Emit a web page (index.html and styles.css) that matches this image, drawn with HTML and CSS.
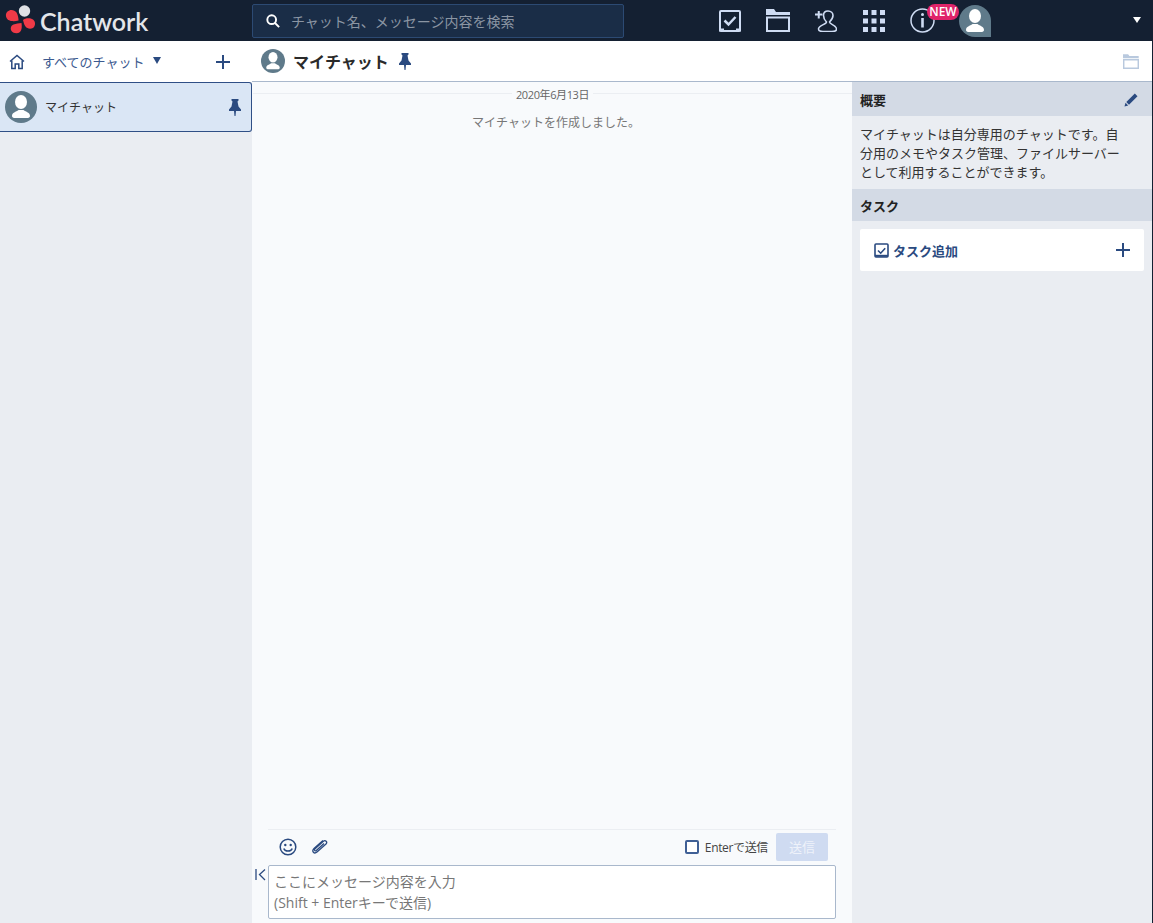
FILE: index.html
```html
<!DOCTYPE html>
<html lang="ja">
  <head>
    <meta charset="utf-8">
    <title>Chatwork</title>
    <link rel="stylesheet" href="styles.css">
  </head>
  <body>
    <div class="Header">
      <div class="Logo">
        <svg class="LogoMark" width="31" height="31" viewBox="5 5 31 31">
          <circle cx="24.5" cy="11" r="5.7" fill="#dfe1e5"/>
          <path d="M18.5 20.5C15 21.5 11 21.5 8.5 20 5.5 18 5 14 7.5 11.5 10 9 14.500 9.500 16.500 12.500 18 15 18.500 18 18.500 20.500z" fill="#f03a47"/>
          <path d="M23 20C25 18 30 17.500 33 19.500 36 22 35.500 26 33 28 30 29.500 27 28.500 25.500 26.500 24 24.500 23.500 22 23 20z" fill="#f03a47"/>
          <path d="M21.500 23C22 26 22 30 20 32 17.500 34 13.500 33.500 11.500 31 10 28.500 11 25.500 13.500 24.500 16 23.500 19 23.500 21.500 23z" fill="#f03a47"/>
        </svg>
        <span class="LogoText">Chatwork</span>
      </div>
      <div class="Search">
        <svg width="14" height="14" viewBox="0 0 16 16" fill="none" stroke="#fff" stroke-width="2.2"><circle cx="6.5" cy="6.500" r="5"/><path d="M10 10l5 5"/></svg>
        <span class="SearchText">チャット名、メッセージ内容を検索</span>
      </div>
      <div class="HeaderIcons">
        <svg class="TopIcon" width="22" height="22" viewBox="0 0 22 22" fill="none" stroke="#cfdcf3" stroke-width="2"><rect x="1" y="1" width="20" height="20" rx="1"/><path d="M5.500 10.500l4 4 7-7.500" stroke-width="2.500"/><path d="M0 20h5M17 20h5" stroke-width="3"/></svg>
        <svg class="TopIcon" width="24" height="23" viewBox="0 0 24 23" fill="none"><path d="M0 0h8l2 3h14v3H0z" fill="#cfdcf3"/><path d="M1 8.500h22V22H1z" stroke="#cfdcf3" stroke-width="2"/></svg>
        <svg class="TopIcon" width="22" height="22" viewBox="0 0 22 22" fill="none" stroke="#cfdcf3" stroke-width="1.600"><path d="M0 4.500h7.500M3.750 1v7.500" stroke-width="2"/><path d="M13 1C10 1 8.500 3 8.500 5.500 8.500 8.500 10 10.500 11.500 12 11.500 14.500 3.500 15 3.500 19 3.500 21 6 21.500 8 21.500H17C19 21.500 21.500 21 21.500 19 21.500 15 14.500 14.500 14.500 12 16 10.500 18 8.500 18 5.500 18 3 16 1 13 1z"/></svg>
        <svg class="TopIcon" width="22" height="22" viewBox="0 0 22 22" fill="#cfdcf3"><rect width="5" height="5"/><rect x="8.500" width="5" height="5"/><rect x="17" width="5" height="5"/><rect y="8.500" width="5" height="5"/><rect x="8.500" y="8.500" width="5" height="5"/><rect x="17" y="8.500" width="5" height="5"/><rect y="17" width="5" height="5"/><rect x="8.500" y="17" width="5" height="5"/><rect x="17" y="17" width="5" height="5"/></svg>
        <div class="InfoIcon">
          <svg width="25" height="25" viewBox="0 0 25 25" fill="none" stroke="#cfdcf3"><circle cx="12.5" cy="12.5" r="11.500" stroke-width="1.500"/><path d="M12.500 10v9.500" stroke-width="2.600"/><circle cx="12.500" cy="6.500" r="1.500" fill="#cfdcf3" stroke="none"/></svg>
          <span class="NewBadge">NEW</span>
        </div>
        <div class="UserTab">
          <svg width="32" height="32" viewBox="0 0 32 32" fill="#fff"><ellipse cx="16" cy="11" rx="6" ry="7"/><path d="M7 25c0-3.500 4-4 6.500-6h5c2.500 2 6.500 2.500 6.500 6 0 1.500-1.500 2-3 2H10c-1.500 0-3-.5-3-2z"/></svg>
        </div>
      </div>
      <span class="HeaderCaret"></span>
    </div>

    <div class="Main">
      <div class="Left">
        <div class="LeftTop">
          <svg class="HomeIcon" width="16" height="16" viewBox="0 0 16 16" fill="none" stroke="#2a4a80" stroke-width="1.500"><path d="M1 7.500L8 1.500l7 6"/><path d="M2.800 6.500v8h3.400V10h3.600v4.500h3.400v-8"/></svg>
          <span class="AllChats">すべてのチャット</span>
          <span class="BlueCaret"></span>
          <svg class="PlusIcon" width="14" height="14" viewBox="0 0 14 14" stroke="#2a4a80" stroke-width="2"><path d="M7 0v14M0 7h14"/></svg>
        </div>
        <div class="Room">
          <div class="Avatar Big">
            <svg width="32" height="32" viewBox="0 0 32 32" fill="#fff"><ellipse cx="16" cy="11" rx="6" ry="7"/><path d="M7 25c0-3.500 4-4 6.500-6h5c2.500 2 6.500 2.500 6.500 6 0 1.500-1.500 2-3 2H10c-1.500 0-3-.5-3-2z"/></svg>
          </div>
          <span class="RoomName">マイチャット</span>
          <svg class="Pin" width="12" height="17" viewBox="0 0 12 17" fill="#2a4a80"><path d="M2.500 0h7v1.500L8.500 2.500l1 5L12 10.500V12H7l-.5 5h-1L5 12H0v-1.500l2.500-3 1-5-1-1z"/></svg>
        </div>
      </div>

      <div class="Body">
        <div class="TitleBar">
          <div class="Avatar Small">
            <svg width="24" height="24" viewBox="0 0 32 32" fill="#fff"><ellipse cx="16" cy="11" rx="6" ry="7"/><path d="M7 25c0-3.500 4-4 6.500-6h5c2.500 2 6.500 2.500 6.500 6 0 1.500-1.500 2-3 2H10c-1.500 0-3-.5-3-2z"/></svg>
          </div>
          <span class="RoomTitle">マイチャット</span>
          <svg class="Pin TitlePin" width="12" height="17" viewBox="0 0 12 17" fill="#2a4a80"><path d="M2.500 0h7v1.500L8.500 2.500l1 5L12 10.500V12H7l-.5 5h-1L5 12H0v-1.500l2.500-3 1-5-1-1z"/></svg>
          <svg class="TitleFolder" width="16" height="15" viewBox="0 0 25 23" fill="none"><path d="M0 0h8l2 3h14.500v3H0z" fill="#b9c9de"/><path d="M1 8.500h23V22H1z" stroke="#b9c9de" stroke-width="2.500"/></svg>
        </div>
        <div class="Columns">
          <div class="Center">
            <div class="Messages">
              <div class="DateLine"><span>2020年6月13日</span></div>
              <p class="Notice">マイチャットを作成しました。</p>
            </div>
            <div class="Composer">
              <div class="Tools">
                <svg class="Smile" width="18" height="18" viewBox="0 0 18 18" fill="none" stroke="#2a4a80" stroke-width="1.500"><circle cx="9" cy="9" r="7.800"/><circle cx="6.300" cy="7" r="1.200" fill="#2a4a80" stroke="none"/><circle cx="11.700" cy="7" r="1.200" fill="#2a4a80" stroke="none"/><path d="M4.800 10.500c1 3.400 7.400 3.400 8.400 0"/></svg>
                <svg class="Clip" width="17" height="16" viewBox="0 0 17 16" fill="none" stroke="#2a4a80" stroke-width="1.300"><path d="M12 1.500L3 9.500c-2.800 2.800.2 6 3 3.600l9-8c1.800-2-.6-4.500-2.600-2.800L3.800 10c-1 1.200.4 2.400 1.500 1.500L13 4.500"/></svg>
                <span class="CheckBox"></span>
                <span class="EnterLabel">Enterで送信</span>
                <span class="SendBtn">送信</span>
              </div>
              <div class="InputRow">
                <svg class="Collapse" width="11" height="12" viewBox="0 0 11 12" fill="none" stroke="#2a4a80" stroke-width="1.300"><path d="M1 0v11"/><path d="M10 .5L4.500 5.500l5.500 5.500"/></svg>
                <div class="InputBox">
                  <span class="Hint">ここにメッセージ内容を入力</span>
                  <span class="Hint">(Shift + Enterキーで送信)</span>
                </div>
              </div>
            </div>
          </div>

          <div class="Right">
            <div class="PanelHead First">
              <span>概要</span>
              <svg width="14" height="14" viewBox="0 0 14 14" fill="#2a4a80"><path d="M10.800.5l2.700 2.700-8.500 8.500-2.700-2.700z"/><path d="M1.500 9.800l2.700 2.700L.5 13.500z"/></svg>
            </div>
            <p class="Summary">マイチャットは自分専用のチャットです。自分用のメモやタスク管理、ファイルサーバーとして利用することができます。</p>
            <div class="PanelHead Second"><span>タスク</span></div>
            <div class="TaskCard">
              <svg width="15" height="15" viewBox="0 0 15 15" fill="none" stroke="#2a4a80" stroke-width="1.600"><rect x="1" y="1" width="13" height="13" rx="1"/><path d="M4 7.500l2.700 2.700 4.500-5"/><path d="M1 12.800h13" stroke-width="2"/></svg>
              <span class="TaskAdd">タスク追加</span>
              <svg class="TaskPlus" width="14" height="14" viewBox="0 0 14 14" stroke="#2a4a80" stroke-width="2"><path d="M7 0v14M0 7h14"/></svg>
            </div>
          </div>
        </div>
      </div>
    </div>
  </body>
</html>
```

FILE: styles.css
```css
* { box-sizing: border-box; }

html, body { height: 100%; }

body {
    margin: 0;
    overflow: hidden;
    font-family: "Open Sans", "Noto Sans CJK JP", sans-serif;
    color: #222;
    background-color: #eaedf2;
}

.Header {
    display: flex;
    align-items: center;
    height: 41px;
    background-color: #142032;
    position: relative;
}

.Logo {
    display: flex;
    align-items: center;
    width: 252px;
    padding-left: 5px;
}

.LogoMark { flex: none; }

.LogoText {
    margin-left: 4px;
    font-family: "Lato", sans-serif;
    font-size: 25px;
    font-weight: 600;
    color: #e4e6ea;
}

.Search {
    display: flex;
    align-items: center;
    width: 372px;
    height: 34px;
    padding-left: 13px;
    background-color: #1a2d47;
    border: 1px solid #2c4a73;
    border-radius: 2px;
}

.SearchText {
    margin-left: 11px;
    font-size: 14px;
    color: #8b95a3;
}

.HeaderIcons {
    display: flex;
    align-items: center;
    margin-left: 95px;
}

.TopIcon { flex: none; }
.TopIcon:nth-child(1) { margin-right: 25px; }
.TopIcon:nth-child(2) { margin-right: 25px; }
.TopIcon:nth-child(3) { margin-right: 26px; }
.TopIcon:nth-child(4) { margin-right: 25px; }

.InfoIcon {
    position: relative;
    width: 49px;
    height: 25px;
}

.NewBadge {
    position: absolute;
    left: 17px;
    top: -4px;
    width: 32px;
    height: 16px;
    line-height: 16px;
    border-radius: 8px;
    text-align: center;
    font-size: 12px;
    font-weight: 600;
    color: #fff;
    background-color: #e0246a;
}

.UserTab {
    width: 32px;
    height: 32px;
    background-color: #5f7a8a;
    border-radius: 50% 50% 0 50%;
}

.HeaderCaret {
    position: absolute;
    right: 12px;
    top: 17px;
    border-style: solid;
    border-width: 6px 4px 0 4px;
    border-color: #fff transparent transparent transparent;
}

.Main {
    display: flex;
    height: 882px;
}

.Left {
    width: 252px;
    flex: none;
    background-color: #eaedf2;
}

.LeftTop {
    display: flex;
    align-items: center;
    height: 41px;
    padding-left: 9px;
    background-color: #fff;
}

.AllChats {
    margin-left: 17px;
    font-size: 13px;
    color: #3c5a90;
}

.BlueCaret {
    margin-left: 9px;
    margin-top: -3px;
    border-style: solid;
    border-width: 7px 4.5px 0 4.5px;
    border-color: #2a4a80 transparent transparent transparent;
}

.PlusIcon { margin-left: 55px; }

.Room {
    display: flex;
    align-items: center;
    height: 50px;
    padding-left: 5px;
    background-color: #dae6f5;
    border: 1px solid #2f4f86;
    border-left: none;
    border-radius: 0 3px 3px 0;
}

.Avatar {
    display: flex;
    align-items: center;
    justify-content: center;
    flex: none;
    overflow: hidden;
    border-radius: 50%;
    background-color: #5f7a8a;
}

.Big { width: 32px; height: 32px; }
.Small { width: 24px; height: 24px; }

.RoomName {
    margin-left: 8px;
    font-size: 12px;
    color: #333;
    flex: 1;
}

.Room .Pin { margin-right: 10px; }

.Body {
    display: flex;
    flex-direction: column;
    flex: 1;
    min-width: 0;
    border-right: 1px solid #142032;
}

.TitleBar {
    display: flex;
    align-items: center;
    flex: none;
    height: 41px;
    padding-left: 9px;
    background-color: #fff;
    border-bottom: 1px solid #a9b8cc;
}

.RoomTitle {
    margin-left: 8px;
    font-size: 16px;
    font-weight: 700;
    color: #2a2a2a;
}

.TitlePin { margin-left: 10px; }

.TitleFolder { margin-left: auto; margin-right: 13px; }

.Columns {
    display: flex;
    flex: 1;
    min-height: 0;
}

.Center {
    display: flex;
    flex-direction: column;
    width: 600px;
    flex: none;
    background-color: #f8fafc;
}

.Messages { flex: 1; }

.DateLine {
    display: flex;
    align-items: center;
    height: 24px;
    margin-left: 1px;
    font-size: 11px;
    letter-spacing: -.4px;
    color: #666;
}

.DateLine::before,
.DateLine::after {
    content: "";
    flex: 1;
    height: 1px;
    margin-bottom: 2px;
    background-color: #ebeef2;
}

.DateLine span { padding: 0 4px; }

.Notice {
    margin: 7px 0 0 0;
    padding-left: 8px;
    text-align: center;
    font-size: 12px;
    color: #777;
}

.Composer { padding-bottom: 4px; }

.Tools {
    display: flex;
    align-items: center;
    width: 568px;
    height: 36px;
    margin-left: 16px;
    padding: 0 0 1px 11px;
    border-top: 1px solid #ebeef2;
}

.Clip { margin-left: 14px; }

.CheckBox {
    width: 14px;
    height: 14px;
    margin-left: auto;
    border: 2px solid #3f5f95;
    border-radius: 2px;
    background-color: #fff;
}

.EnterLabel {
    margin-left: 6px;
    font-size: 12px;
    letter-spacing: -.35px;
    color: #444;
}

.SendBtn {
    width: 52px;
    height: 28px;
    line-height: 28px;
    margin-left: 8px;
    margin-right: 8px;
    text-align: center;
    font-size: 13px;
    color: #eef2fa;
    background-color: #cfdbf1;
    border-radius: 2px;
}

.InputRow { display: flex; }

.Collapse { flex: none; margin: 4px 0 0 3px; }

.InputBox {
    display: flex;
    flex-direction: column;
    width: 568px;
    height: 54px;
    margin-left: 2px;
    padding: 5px;
    background-color: #fff;
    border: 1px solid #a9b8cc;
    border-radius: 2px;
    color: #777;
}

.Hint { font-size: 14px; line-height: 21px; }

.Right {
    flex: 1;
    min-width: 0;
    background-color: #eaedf2;
}

.PanelHead {
    display: flex;
    align-items: center;
    justify-content: space-between;
    padding: 0 14px 0 8px;
    background-color: #d3dae5;
    font-weight: 700;
    font-size: 13px;
}

.First { height: 34px; padding-top: 1px; }
.Second { height: 32px; }

.Summary {
    margin: 0;
    padding: 9px 28px 0 8px;
    height: 73px;
    font-size: 13px;
    line-height: 19px;
    color: #333;
}

.TaskCard {
    display: flex;
    align-items: center;
    height: 42px;
    margin: 8px 8px 0 8px;
    padding: 0 14px;
    background-color: #fff;
    border-radius: 2px;
}

.TaskAdd {
    margin-left: 4px;
    font-size: 13px;
    font-weight: 700;
    color: #2a4a80;
}

.TaskPlus { margin-left: auto; }
```
